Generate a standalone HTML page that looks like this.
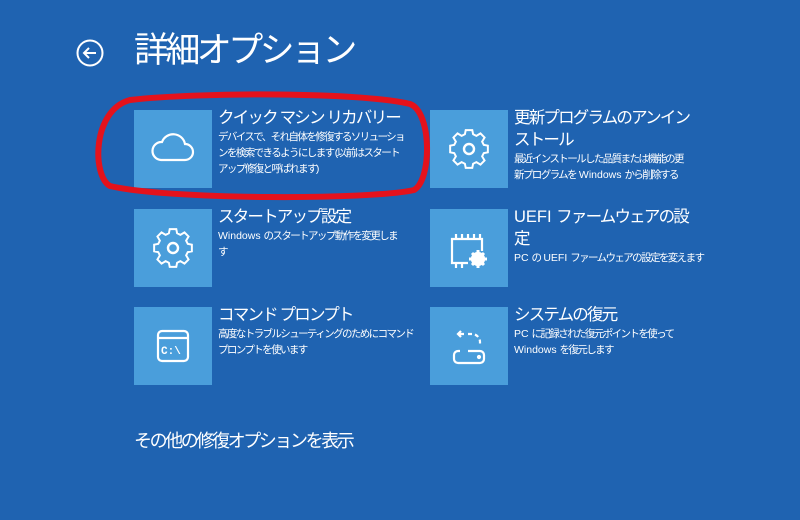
<!DOCTYPE html>
<html><head><meta charset="utf-8"><style>
body{margin:0;width:800px;height:520px;background:#1f63b1;overflow:hidden;position:relative;font-family:"Liberation Sans","Noto Sans CJK JP",sans-serif;color:#fff}
.t{position:absolute;width:78px;height:78px;background:#4a9edb}
.t svg{position:absolute;left:0;top:0}
.h{position:absolute;font-size:16.5px;line-height:22px;width:260px;letter-spacing:-1.8px;white-space:nowrap}
.d{position:absolute;font-size:10.5px;line-height:16px;width:260px;letter-spacing:-1.6px;white-space:nowrap}
.l{letter-spacing:0}
</style></head><body>
<svg style="position:absolute;left:76px;top:39px" width="28" height="28" viewBox="0 0 28 28" fill="none" stroke="#fff" stroke-width="2"><circle cx="14" cy="14" r="12.5"/><path d="M20 14H8M13 9l-5 5 5 5"/></svg>
<div style="position:absolute;left:134px;top:27px;font-size:35px;line-height:48px;letter-spacing:-3.6px">詳細オプション</div>

<div class="t" style="left:134px;top:110px"><svg width="78" height="78" fill="none" stroke="#fff" stroke-width="2.2"><path d="M27 50h24a8 8 0 0 0 0-16 12 12 0 0 0-23-2 9 9 0 0 0-1 18z"/></svg></div>
<div class="h" style="left:218px;top:107px">クイック マシン リカバリー</div>
<div class="d" style="left:218px;top:129px">デバイスで、それ自体を修復するソリューショ<br>ンを検索できるようにします (以前はスタート<br>アップ修復と呼ばれます)</div>

<div class="t" style="left:134px;top:209px"><svg width="78" height="78" fill="none" stroke="#fff" stroke-width="2.4" viewBox="0 0 78 78"><path d="M35 24h8l1 5 4 2 5-3 5 5-3 5 2 4 5 1v8l-5 1-2 4 3 5-5 5-5-3-4 2-1 5h-8l-1-5-4-2-5 3-5-5 3-5-2-4-5-1v-8l5-1 2-4-3-5 5-5 5 3 4-2z" transform="translate(39 39) scale(.82) translate(-39 -47)"/><circle cx="39" cy="39" r="5"/></svg></div>
<div class="h" style="left:218px;top:206px">スタートアップ設定</div>
<div class="d" style="left:218px;top:228px"><span class="l">Windows </span>のスタートアップ動作を変更しま<br>す</div>

<div class="t" style="left:134px;top:307px"><svg width="78" height="78" fill="none" stroke="#fff" stroke-width="2.2"><rect x="24" y="24" width="30" height="30" rx="4"/><path d="M24 31h30"/><text x="27" y="47" font-family="Liberation Mono,monospace" font-size="11" fill="#fff" stroke="none" font-weight="bold">C:\</text></svg></div>
<div class="h" style="left:218px;top:304px">コマンド プロンプト</div>
<div class="d" style="left:218px;top:326px">高度なトラブルシューティングのためにコマンド<br>プロンプトを使います</div>

<div class="t" style="left:430px;top:110px"><svg width="78" height="78" fill="none" stroke="#fff" stroke-width="2.4" viewBox="0 0 78 78"><path d="M35 24h8l1 5 4 2 5-3 5 5-3 5 2 4 5 1v8l-5 1-2 4 3 5-5 5-5-3-4 2-1 5h-8l-1-5-4-2-5 3-5-5 3-5-2-4-5-1v-8l5-1 2-4-3-5 5-5 5 3 4-2z" transform="translate(39 39) scale(.82) translate(-39 -47)"/><circle cx="39" cy="39" r="5"/></svg></div>
<div class="h" style="left:514px;top:107px">更新プログラムのアンイン<br>ストール</div>
<div class="d" style="left:514px;top:151px">最近インストールした品質または機能の更<br>新プログラムを<span class="l"> Windows </span>から削除する</div>

<div class="t" style="left:430px;top:209px"><svg width="78" height="78" fill="none" stroke="#fff" stroke-width="2.2"><path d="M38 54H22V30h30v12M26 30v-5M32 30v-5M38 30v-5M44 30v-5M50 30v-5M26 54v5M32 54v5"/><circle cx="48" cy="50" r="6" fill="#fff"/><path d="M48 41v18M39 50h18M42 44l12 12M54 44l-12 12" stroke-width="3"/></svg></div>
<div class="h" style="left:514px;top:206px"><span class="l">UEFI </span>ファームウェアの設<br>定</div>
<div class="d" style="left:514px;top:250px"><span class="l">PC </span>の<span class="l"> UEFI </span>ファームウェアの設定を変えます</div>

<div class="t" style="left:430px;top:307px"><svg width="78" height="78" fill="none" stroke="#fff" stroke-width="2.2"><path d="M34 27h-6M31 24l-3 3 3 3" /><path d="M38 27h4a8 8 0 0 1 8 8v4" stroke-dasharray="4 3"/><path d="M30 44h-2a4 4 0 0 0-4 4v4a4 4 0 0 0 4 4h22a4 4 0 0 0 4-4v-4a4 4 0 0 0-4-4h-12"/><circle cx="49" cy="50" r="1" fill="#fff"/></svg></div>
<div class="h" style="left:514px;top:304px">システムの復元</div>
<div class="d" style="left:514px;top:326px"><span class="l">PC </span>に記録された復元ポイントを使って<br><span class="l">Windows </span>を復元します</div>

<div style="position:absolute;left:134px;top:428px;font-size:18px;line-height:26px;letter-spacing:-2.4px">その他の修復オプションを表示</div>

<svg style="position:absolute;left:0;top:0" width="800" height="520"><path d="M130 100 C200 92 360 92 410 104 C432 112 432 180 414 190 C370 200 170 200 110 186 C92 176 92 110 130 100Z" fill="none" stroke="#e4121c" stroke-width="6"/></svg>
</body></html>
